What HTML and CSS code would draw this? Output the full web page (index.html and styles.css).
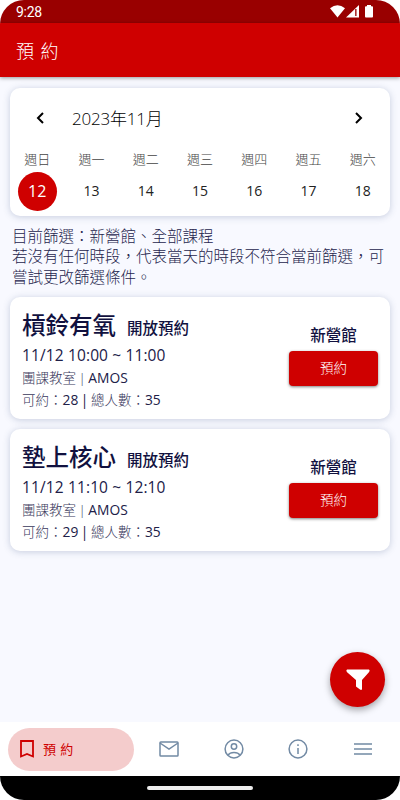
FILE: index.html
```html
<!DOCTYPE html>
<html lang="zh-Hant">
<head>
<meta charset="utf-8">
<title>預約</title>
<link rel="stylesheet" href="styles.css">
</head>
<body>
<div class="phone">
  <div class="status">
    <span>9:28</span>
    <svg width="46" height="16" viewBox="0 0 46 16" fill="#fff">
      <path d="M0 4.200Q7.500-1.700 15 4.200L7.500 13.500z"/>
      <path d="M16 13.500 29 1V13.500z"/><path d="M25.200 5h1.300v7h-1.300z" fill="#900"/>
      <path d="M35 3.200q0-.9.900-.9H37V1h4v1.300h1.100q.9 0 .9.900v9.400q0 .9-.9.900h-6.200q-.9 0-.9-.9z"/>
    </svg>
  </div>
  <header class="appbar">預 約</header>
  <main class="content">
    <section class="card calendar">
      <div class="month">
        <svg width="24" height="24" viewBox="0 0 24 24"><path d="m15 7-5 5 5 5"/></svg>
        <span>2023年11月</span>
        <svg width="24" height="24" viewBox="0 0 24 24"><path d="m9 7 5 5-5 5"/></svg>
      </div>
      <div class="week names"><span>週日</span><span>週一</span><span>週二</span><span>週三</span><span>週四</span><span>週五</span><span>週六</span></div>
      <div class="week dates"><span class="selected">12</span><span>13</span><span>14</span><span>15</span><span>16</span><span>17</span><span>18</span></div>
    </section>
    <p class="note">目前篩選：新營館、全部課程<br>若沒有任何時段，代表當天的時段不符合當前篩選，可<br>嘗試更改篩選條件。</p>
    <section class="card lesson">
      <div class="info">
        <h2>槓鈴有氧<small>開放預約</small></h2>
        <div class="time">11/12 10:00 ~ 11:00</div>
        <div class="detail">團課教室 | <span>AMOS</span></div>
        <div class="detail">可約：<span>28 |</span> 總人數：<span>35</span></div>
      </div>
      <div class="action"><b>新營館</b><button>預約</button></div>
    </section>
    <section class="card lesson">
      <div class="info">
        <h2>墊上核心<small>開放預約</small></h2>
        <div class="time">11/12 11:10 ~ 12:10</div>
        <div class="detail">團課教室 | <span>AMOS</span></div>
        <div class="detail">可約：<span>29 |</span> 總人數：<span>35</span></div>
      </div>
      <div class="action"><b>新營館</b><button>預約</button></div>
    </section>
    <div class="fab"><svg width="26" height="24" viewBox="0 0 26 24"><path d="M2 1.500h22q1.500 1-.1 2.700L17 12V21.200q-.6 1.300-2 .4l-4-3V12L2.100 4.200Q.5 2.500 2 1.500z" fill="#fff"/></svg></div>
  </main>
  <nav class="tabs">
    <div class="tab active">
      <svg width="20" height="20" viewBox="0 0 20 20"><path d="M4 2h12v15.500l-6-2.600-6 2.600z"/></svg>
      <span>預 約</span>
    </div>
    <div class="tab"><svg width="22" height="22" viewBox="0 0 22 22"><rect x="2" y="4" width="18" height="14" rx=".8"/><path d="m2 5 9 6 9-6"/></svg></div>
    <div class="tab"><svg width="22" height="22" viewBox="0 0 22 22"><circle cx="11" cy="11" r="8.900"/><circle cx="11" cy="8.500" r="2.700"/><path d="M5 17q1.800-2.600 6-2.600t6 2.600"/></svg></div>
    <div class="tab"><svg width="22" height="22" viewBox="0 0 22 22"><circle cx="11" cy="11" r="8.900"/><path d="M11 10v6M11 6.200v1.700"/></svg></div>
    <div class="tab"><svg width="22" height="22" viewBox="0 0 22 22"><path d="M2 6h18M2 11h18M2 16h18"/></svg></div>
  </nav>
  <div class="gesture"><i></i></div>
</div>
</body>
</html>
```
FILE: styles.css
```css
* { box-sizing: border-box; }
body {
  margin: 0;
  background: #fff;
  font-family: "Open Sans", "Noto Sans CJK TC", sans-serif;
  font-weight: 300;
  color: #11113f;
}
.phone {
  width: 400px;
  height: 800px;
  display: flex;
  flex-direction: column;
  border-radius: 24px;
  overflow: hidden;
  background: #f8f9ff;
}
.status {
  height: 23px;
  flex: none;
  background: #900;
  color: #fff;
  display: flex;
  justify-content: space-between;
  padding: 4px 24px 0 16px;
  font: 400 14px/17px Roboto, sans-serif;
}
.status span { letter-spacing: -.3px; }
.appbar {
  height: 54px;
  flex: none;
  background: #cf0000;
  color: #fff;
  font-size: 18px;
  line-height: 56px;
  padding-left: 16px;
  letter-spacing: .9px;
  box-shadow: 0 1px 4px rgba(0, 0, 0, .4);
  z-index: 1;
}
.content { flex: 1; padding: 10.500px 10px 0; position: relative; }
.card {
  background: #fff;
  border-radius: 10px;
  box-shadow: 0 1px 7px rgba(50, 75, 125, .25);
}
.calendar { height: 128px; color: #000; }
.month {
  display: flex;
  align-items: center;
  height: 61px;
  padding: 0 19px 0 18px;
  font-size: 17px;
  letter-spacing: -.2px;
}
.month span { margin-left: 20px; margin-top: -1px; }
.month svg { fill: none; stroke: #000; stroke-width: 2; }
.month svg:last-child { margin-left: auto; }
.week { display: grid; grid-template-columns: repeat(7, 1fr); text-align: center; justify-items: center; }
.names { height: 23px; line-height: 21px; font-size: 13px; color: #444; }
.dates { line-height: 38px; font-size: 14px; font-weight: 400; color: #222; }
.dates .selected { width: 39px; height: 39px; border-radius: 50%; background: #cf0000; color: #fff; font-size: 16px; }
.note { margin: 10px -10px 10px 2px; font-size: 15.500px; line-height: 20.500px; white-space: nowrap; color: #25254d; }
.lesson { height: 122px; margin-bottom: 10px; padding: 13px 12px 0; display: flex; justify-content: space-between; }
.info { white-space: nowrap; }
h2 { margin: 0; height: 35px; font-size: 23.500px; line-height: 30px; font-weight: 500; }
h2 small { margin-left: 11px; font-size: 15.500px; }
.time { font-size: 15.500px; line-height: 21px; height: 22px; font-weight: 400; letter-spacing: .13px; color: #202048; }
.detail { font-size: 13.500px; line-height: 21px; word-spacing: -1px; color: #38385b; }
.detail span { color: #202048; font-weight: 400; font-size: 13.800px; }
.action { width: 89px; padding-top: 15px; text-align: center; }
.action b { display: block; height: 26px; line-height: 21px; font-size: 15.500px; font-weight: 500; }
.action button {
  display: block;
  width: 89px;
  height: 35px;
  padding: 0;
  border: 0;
  border-radius: 4px;
  background: #cf0000;
  color: #fff;
  font: 300 13.500px/35px "Open Sans", "Noto Sans CJK TC", sans-serif;
  box-shadow: 0 1px 3px rgba(0, 0, 0, .5);
}
.fab {
  position: absolute;
  right: 15px;
  bottom: 15px;
  width: 55px;
  height: 55px;
  border-radius: 50%;
  display: grid;
  place-items: center;
  background: #cf0000;
  box-shadow: 0 3px 7px rgba(0, 0, 0, .35);
}
.tabs { height: 54px; flex: none; display: flex; align-items: center; background: #fff; padding-left: 8px; }
.tab { width: 64.500px; display: flex; justify-content: center; }
.tab svg { fill: none; stroke: #728aa4; stroke-width: 1.500; }
.tab.active {
  width: 126px;
  height: 43px;
  margin-right: 3px;
  border-radius: 22px;
  background: #f4cccc;
  color: #cf0000;
  align-items: center;
  justify-content: flex-start;
  padding-left: 9px;
  font-size: 13px;
  font-weight: 400;
}
.tab.active svg { stroke: #cf0000; stroke-width: 1.800; }
.tab.active span { margin: -1px 0 0 6px; letter-spacing: .4px; }
.gesture { height: 24px; flex: none; background: #000; display: flex; justify-content: center; padding-top: 10px; }
.gesture i { width: 106px; height: 4px; border-radius: 2px; background: #eee; }
```
